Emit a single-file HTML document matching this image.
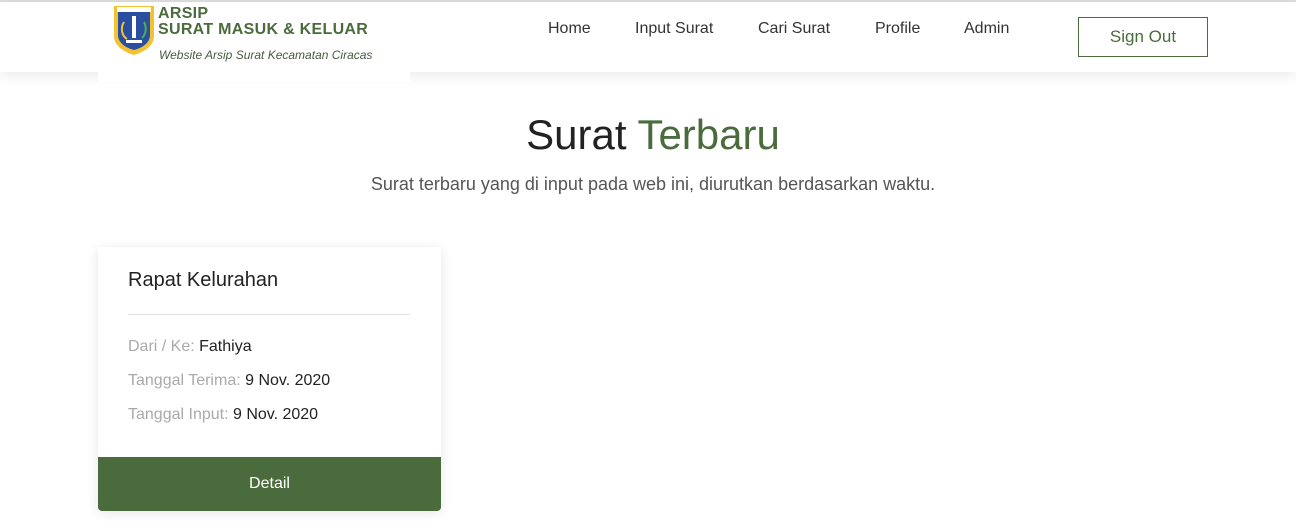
<!DOCTYPE html>
<html><head><meta charset="utf-8"><style>
*{margin:0;padding:0;box-sizing:border-box}
body{width:1296px;height:532px;overflow:hidden;background:#fff;font-family:"Liberation Sans",Arial,sans-serif;position:relative}
.top{position:absolute;left:0;top:0;width:1296px;height:2px;background:#ddd}
.nav{position:absolute;left:0;top:2px;width:1296px;height:70px;background:#fff;box-shadow:0 4px 12px rgba(0,0,0,.08)}
.logobox{position:absolute;left:98px;top:2px;width:312px;height:80px;background:#fff;z-index:2}
.crest{position:absolute;left:14px;top:2px}
.t1{position:absolute;left:60px;top:4px;color:#4a6b3c;font-weight:bold;font-size:16px;line-height:16px;letter-spacing:.3px}
.t3{position:absolute;left:61px;top:46px;color:#4a5a40;font-style:italic;font-size:12px}
.menu a{position:absolute;top:20px;font-size:16px;color:#333;text-decoration:none}
.btn{position:absolute;left:1078px;top:17px;width:130px;height:40px;border:1px solid #4a6b3c;color:#4a6b3c;font-size:17px;text-align:center;line-height:38px}
h1{position:absolute;left:0;width:1306px;top:111px;text-align:center;font-weight:normal;font-size:42px;color:#222}
h1 span{color:#4a6b3c}
.sub{position:absolute;left:0;width:1306px;top:174px;text-align:center;font-size:18px;color:#555}
.card{position:absolute;left:98px;top:247px;width:343px;height:264px;background:#fff;box-shadow:0 2px 12px rgba(0,0,0,.1);border-radius:0 0 4px 4px}
.card h3{position:absolute;left:30px;top:22px;font-weight:normal;font-size:20px;color:#222}
.hr{position:absolute;left:30px;top:67px;width:282px;height:1px;background:#e2e2e2}
.row{position:absolute;left:30px;font-size:16px;color:#222}
.row span{color:#aaa}
.det{position:absolute;left:0;bottom:0;width:343px;height:54px;background:#4a6b3c;color:#fff;font-size:16px;text-align:center;line-height:54px;border-radius:0 0 4px 4px}
</style></head><body>
<div class="top"></div>
<div class="nav"></div>
<div class="logobox">
<svg class="crest" width="44" height="52" viewBox="0 0 44 52"><path d="M2 2h40v30c0 10-10 16-20 19C12 48 2 42 2 32z" fill="#f2c230"/><path d="M6 8h32v23c0 8-8 13-16 15C14 44 6 39 6 31z" fill="#2a4fa0"/><rect x="5" y="3" width="34" height="5" fill="#fff"/><rect x="20" y="12" width="4" height="22" fill="#fff"/><path d="M14 36h16v3H14z" fill="#fff"/><path d="M12 18c-4 6-2 14 3 17" stroke="#f2c230" stroke-width="2" fill="none"/><path d="M32 18c3 6 2 12-2 16" stroke="#4caf50" stroke-width="2" fill="none"/></svg>
<div class="t1">ARSIP<br>SURAT MASUK &amp; KELUAR</div>
<div class="t3">Website Arsip Surat Kecamatan Ciracas</div>
</div>
<div class="menu"><a style="left:548px">Home</a><a style="left:635px">Input Surat</a><a style="left:758px">Cari Surat</a><a style="left:875px">Profile</a><a style="left:964px">Admin</a></div>
<div class="btn">Sign Out</div>
<h1>Surat <span>Terbaru</span></h1>
<div class="sub">Surat terbaru yang di input pada web ini, diurutkan berdasarkan waktu.</div>
<div class="card">
<h3>Rapat Kelurahan</h3>
<div class="hr"></div>
<div class="row" style="top:91px"><span>Dari / Ke:</span> Fathiya</div>
<div class="row" style="top:125px"><span>Tanggal Terima:</span> 9 Nov. 2020</div>
<div class="row" style="top:159px"><span>Tanggal Input:</span> 9 Nov. 2020</div>
<div class="det">Detail</div>
</div>
</body></html>
